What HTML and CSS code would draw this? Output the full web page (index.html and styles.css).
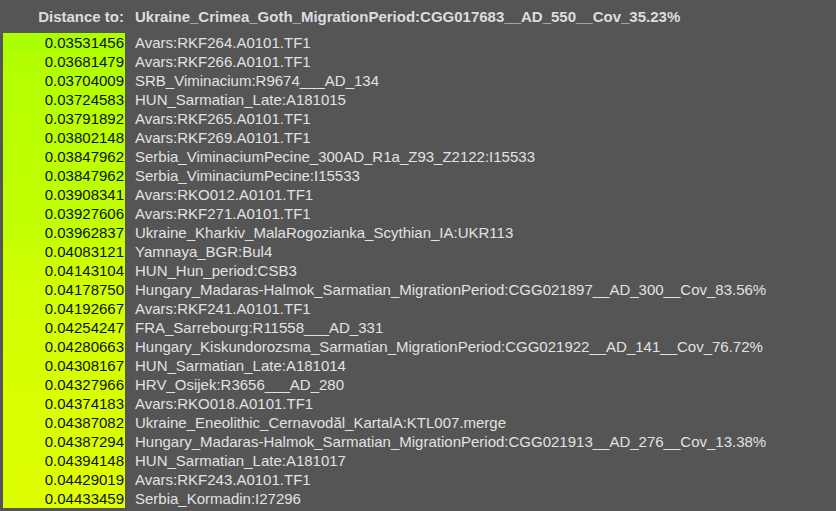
FILE: index.html
```html
<!DOCTYPE html>
<html>
<head>
<meta charset="utf-8">
<link rel="stylesheet" href="styles.css">
</head>
<body>
<div class="grid">
  <div class="hd-label">Distance to:</div>
  <div class="hd-target">Ukraine_Crimea_Goth_MigrationPeriod:CGG017683__AD_550__Cov_35.23%</div>

  <div class="dist" style="background:rgb(170,255,0)">0.03531456</div><div class="name">Avars:RKF264.A0101.TF1</div>
  <div class="dist" style="background:rgb(178,255,0)">0.03681479</div><div class="name">Avars:RKF266.A0101.TF1</div>
  <div class="dist" style="background:rgb(180,255,0)">0.03704009</div><div class="name">SRB_Viminacium:R9674___AD_134</div>
  <div class="dist" style="background:rgb(181,255,0)">0.03724583</div><div class="name">HUN_Sarmatian_Late:A181015</div>
  <div class="dist" style="background:rgb(185,255,0)">0.03791892</div><div class="name">Avars:RKF265.A0101.TF1</div>
  <div class="dist" style="background:rgb(185,255,0)">0.03802148</div><div class="name">Avars:RKF269.A0101.TF1</div>
  <div class="dist" style="background:rgb(188,255,0)">0.03847962</div><div class="name">Serbia_ViminaciumPecine_300AD_R1a_Z93_Z2122:I15533</div>
  <div class="dist" style="background:rgb(188,255,0)">0.03847962</div><div class="name">Serbia_ViminaciumPecine:I15533</div>
  <div class="dist" style="background:rgb(191,255,0)">0.03908341</div><div class="name">Avars:RKO012.A0101.TF1</div>
  <div class="dist" style="background:rgb(192,255,0)">0.03927606</div><div class="name">Avars:RKF271.A0101.TF1</div>
  <div class="dist" style="background:rgb(194,255,0)">0.03962837</div><div class="name">Ukraine_Kharkiv_MalaRogozianka_Scythian_IA:UKR113</div>
  <div class="dist" style="background:rgb(201,255,0)">0.04083121</div><div class="name">Yamnaya_BGR:Bul4</div>
  <div class="dist" style="background:rgb(205,255,0)">0.04143104</div><div class="name">HUN_Hun_period:CSB3</div>
  <div class="dist" style="background:rgb(207,255,0)">0.04178750</div><div class="name">Hungary_Madaras-Halmok_Sarmatian_MigrationPeriod:CGG021897__AD_300__Cov_83.56%</div>
  <div class="dist" style="background:rgb(207,255,0)">0.04192667</div><div class="name">Avars:RKF241.A0101.TF1</div>
  <div class="dist" style="background:rgb(211,255,0)">0.04254247</div><div class="name">FRA_Sarrebourg:R11558___AD_331</div>
  <div class="dist" style="background:rgb(212,255,0)">0.04280663</div><div class="name">Hungary_Kiskundorozsma_Sarmatian_MigrationPeriod:CGG021922__AD_141__Cov_76.72%</div>
  <div class="dist" style="background:rgb(214,255,0)">0.04308167</div><div class="name">HUN_Sarmatian_Late:A181014</div>
  <div class="dist" style="background:rgb(215,255,0)">0.04327966</div><div class="name">HRV_Osijek:R3656___AD_280</div>
  <div class="dist" style="background:rgb(218,255,0)">0.04374183</div><div class="name">Avars:RKO018.A0101.TF1</div>
  <div class="dist" style="background:rgb(218,255,0)">0.04387082</div><div class="name">Ukraine_Eneolithic_Cernavodăl_KartalA:KTL007.merge</div>
  <div class="dist" style="background:rgb(218,255,0)">0.04387294</div><div class="name">Hungary_Madaras-Halmok_Sarmatian_MigrationPeriod:CGG021913__AD_276__Cov_13.38%</div>
  <div class="dist" style="background:rgb(219,255,0)">0.04394148</div><div class="name">HUN_Sarmatian_Late:A181017</div>
  <div class="dist" style="background:rgb(221,255,0)">0.04429019</div><div class="name">Avars:RKF243.A0101.TF1</div>
  <div class="dist" style="background:rgb(221,255,0)">0.04433459</div><div class="name">Serbia_Kormadin:I27296</div>
</div>
</body>
</html>
```
FILE: styles.css
```css
html, body {
  margin: 0;
  padding: 0;
  background: #555555;
}
body {
  padding: 0 3px;
  font-family: "Liberation Sans", Arial, sans-serif;
  font-size: 15px;
  line-height: 19px;
}
.grid {
  display: grid;
  grid-template-columns: 122px auto;
  justify-content: start;
}
.hd-label, .hd-target {
  font-weight: bold;
  color: #dcdde0;
  height: 33px;
  box-sizing: border-box;
  padding-top: 7px;
  white-space: nowrap;
}
.hd-label {
  text-align: right;
  padding-right: 1px;
}
.hd-target {
  padding-left: 10px;
}
.dist {
  height: 19px;
  text-align: right;
  padding-right: 1px;
  color: #111;
}
.name {
  height: 19px;
  padding-left: 10px;
  color: #e2e2e2;
  white-space: nowrap;
}
```
